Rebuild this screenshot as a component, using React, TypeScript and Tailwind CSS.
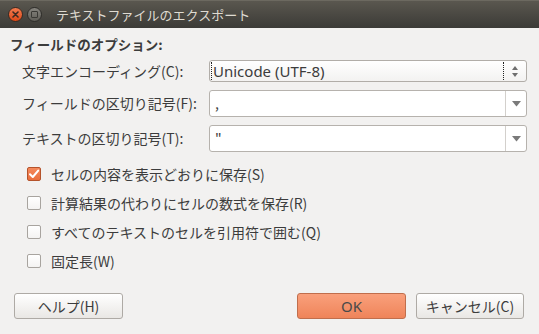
import React from "react";

function Check({ checked }: { checked?: boolean }) {
  if (checked) {
    return (
      <div className="w-[14px] h-[14px] rounded-[2px] border border-[#b5532b] bg-gradient-to-b from-[#f4895c] to-[#ea6e3c] flex items-center justify-center">
        <svg width="12" height="12" viewBox="0 0 12 12">
          <path d="M2 6.2 L4.8 9 L10.2 2.6" fill="none" stroke="#ffffff" strokeWidth="2" strokeLinecap="round" strokeLinejoin="round" />
        </svg>
      </div>
    );
  }
  return <div className="w-[14px] h-[14px] rounded-[2px] border border-[#a8a49f] bg-gradient-to-b from-[#ffffff] to-[#f4f3f2]" />;
}

function DropCombo({ value }: { value: string }) {
  return (
    <div className="h-[27px] flex rounded-[3px] border border-[#b6b2ad] bg-white">
      <div className="flex-1 flex items-center pl-[5px] text-[14px] text-[#3c3c3c]">{value}</div>
      <div className="w-[21px] border-l border-[#d3d0cc] flex items-center justify-center">
        <svg width="9" height="6" viewBox="0 0 9 6">
          <path d="M0 0 L9 0 L4.5 5.5 Z" fill="#7a7a7a" />
        </svg>
      </div>
    </div>
  );
}

export default function App() {
  return (
    <div className="w-[539px] h-[334px] bg-[#f2f1f0] flex flex-col font-['Noto_Sans_CJK_JP',sans-serif] text-[#3c3c3c] overflow-hidden">
      {/* title bar */}
      <div className="h-[28px] bg-gradient-to-b from-[#5a574f] to-[#3c3b37] border-t border-[#6c6960] flex items-center shrink-0">
        <div className="ml-[8px] w-[15px] h-[15px] rounded-full bg-gradient-to-b from-[#f27a4d] to-[#dd4814] border border-[#3a2a22] flex items-center justify-center">
          <svg width="7" height="7" viewBox="0 0 7 7">
            <path d="M1 1 L6 6 M6 1 L1 6" stroke="#3b2a22" strokeWidth="1.6" strokeLinecap="round" />
          </svg>
        </div>
        <div className="ml-[4px] w-[15px] h-[15px] rounded-full bg-gradient-to-b from-[#86847e] to-[#5f5d57] border border-[#2e2d2a] flex items-center justify-center">
          <div className="w-[7px] h-[7px] border-[1.5px] border-[#3a3935] rounded-[1px]" />
        </div>
        <div className="ml-[14px] text-[13px] text-[#dfdbd2] leading-none">テキストファイルのエクスポート</div>
      </div>

      {/* body */}
      <div className="pl-[10px] pt-[7px] h-[20px] box-content flex items-center text-[13.5px] font-bold leading-none">
        フィールドのオプション:
      </div>

      <div className="mt-[5px] ml-[22px] mr-[12px] grid grid-cols-[187px_1fr] gap-y-[8px] text-[14px]">
        <div className="flex items-center h-[22px]">文字エンコーディング(C):</div>
        <div className="h-[22px] flex rounded-[3px] border border-[#b1ada8] bg-gradient-to-b from-[#ffffff] to-[#f3f2f1]">
          <div className="flex-1 flex items-center pl-[1px] my-[1px] ml-[1px] border-l border-r border-dotted border-[#222222] text-[15px] text-[#3c3c3c] leading-none font-['Noto_Sans',sans-serif]">
            Unicode (UTF-8)
          </div>
          <div className="w-[22px] flex flex-col items-center justify-center gap-[3px]">
            <svg width="6" height="4" viewBox="0 0 6 4">
              <path d="M0 4 L6 4 L3 0 Z" fill="#6e6e6e" />
            </svg>
            <svg width="6" height="4" viewBox="0 0 6 4">
              <path d="M0 0 L6 0 L3 4 Z" fill="#6e6e6e" />
            </svg>
          </div>
        </div>

        <div className="flex items-center h-[27px]">フィールドの区切り記号(F):</div>
        <DropCombo value="," />

        <div className="flex items-center h-[27px]">テキストの区切り記号(T):</div>
        <DropCombo value={'"'} />
      </div>

      <div className="mt-[7px] pl-[27px] flex flex-col text-[14px]">
        {[
          { t: "セルの内容を表示どおりに保存(S)", c: true },
          { t: "計算結果の代わりにセルの数式を保存(R)", c: false },
          { t: "すべてのテキストのセルを引用符で囲む(Q)", c: false },
          { t: "固定長(W)", c: false },
        ].map((r) => (
          <div key={r.t} className="h-[29px] flex items-center gap-[10px]">
            <Check checked={r.c} />
            <span className="leading-none">{r.t}</span>
          </div>
        ))}
      </div>

      <div className="mt-[18px] flex items-center px-[14px] text-[14px]">
        <button className="w-[109px] h-[26px] rounded-[3px] border border-[#aeaaa5] bg-gradient-to-b from-[#ffffff] to-[#e9e7e4] text-[#3c3c3c] flex items-center justify-center leading-none">
          ヘルプ(H)
        </button>
        <div className="flex-1" />
        <button className="w-[109px] h-[26px] rounded-[3px] border border-[#c06e4c] bg-gradient-to-b from-[#f9a07c] to-[#ef8459] text-[#4a4a4a] flex items-center justify-center leading-none font-['Noto_Sans',sans-serif] text-[15px]">
          OK
        </button>
        <button className="ml-[10px] mr-[1px] w-[108px] h-[26px] rounded-[3px] border border-[#aeaaa5] bg-gradient-to-b from-[#ffffff] to-[#e9e7e4] text-[#3c3c3c] flex items-center justify-center leading-none">
          キャンセル(C)
        </button>
      </div>
    </div>
  );
}
